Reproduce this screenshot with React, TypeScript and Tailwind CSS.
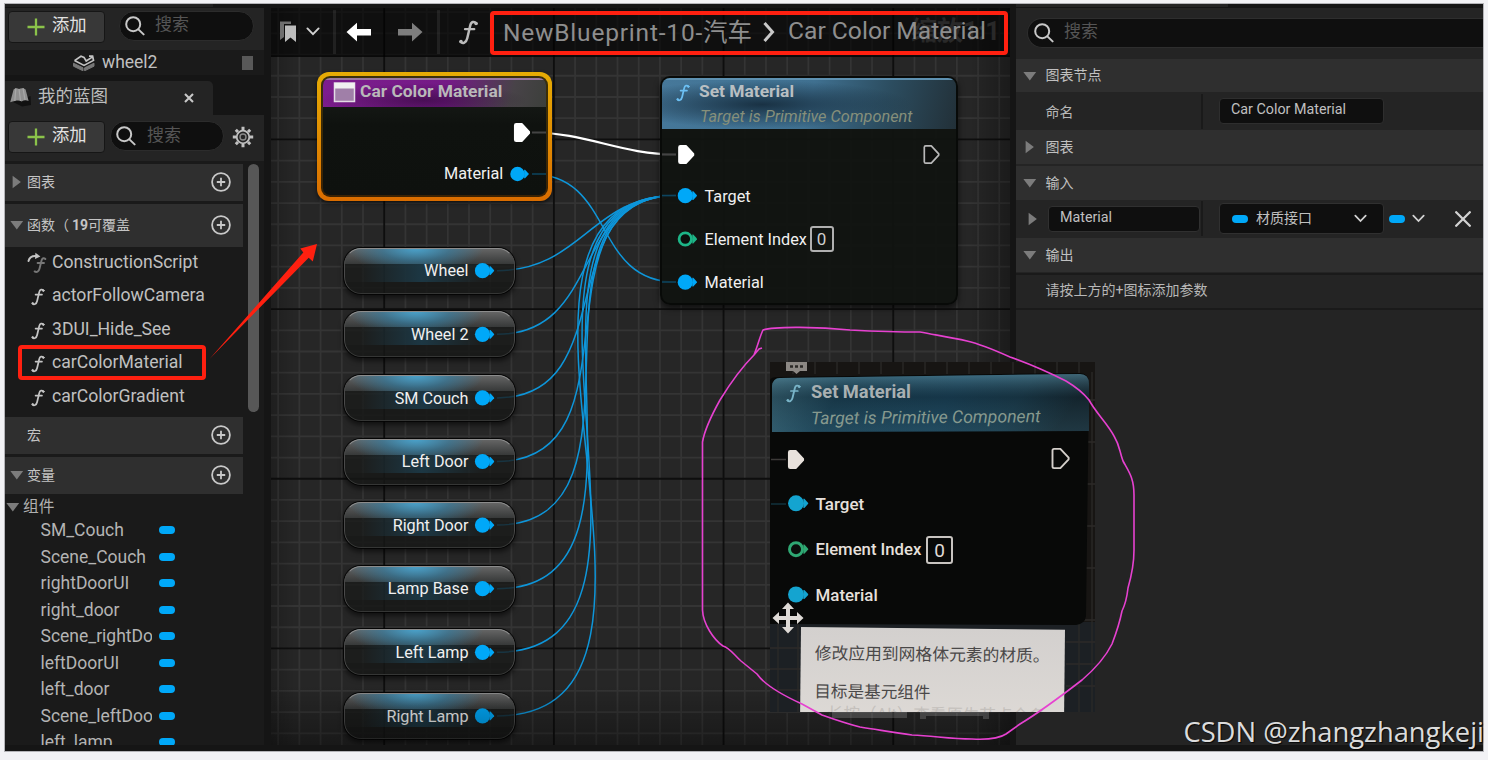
import React from "react";

const BLUE = "#00a8f8";

function FnIcon({ className = "", color = "#c4c4c4" }: { className?: string; color?: string }) {
  return (
    <svg viewBox="0 0 16 20" className={className} fill="none" stroke={color} strokeLinecap="round">
      <path d="M14.4 2.8C12.6.8 10.1 1.2 9.4 4.4L7 14.6C6.2 18.2 3.4 19.4 1.6 17.4" strokeWidth="2" />
      <path d="M5.2 7.3H12.6" strokeWidth="1.8" />
      <circle cx="14" cy="2.7" r=".9" fill={color} />
      <circle cx="2" cy="17.2" r=".9" fill={color} />
    </svg>
  );
}

function SearchIcon() {
  return (
    <svg viewBox="0 0 20 20" className="h-5 w-5 shrink-0" fill="none" stroke="#c8c8c8" strokeWidth="2" strokeLinecap="round">
      <circle cx="8.2" cy="8.2" r="7" />
      <path d="M13.4 13.4L18.6 18.4" />
    </svg>
  );
}

function Tri({ open, className = "" }: { open: boolean; className?: string }) {
  return (
    <svg viewBox="0 0 14 14" className={`h-3.5 w-3.5 shrink-0 ${className}`} fill="#7c7c7c">
      <path d={open ? "M.4 3H13.2L6.8 11.5Z" : "M2.6 .8V13.2L10.9 7Z"} />
    </svg>
  );
}

function PlusCircle() {
  return (
    <svg viewBox="0 0 20 20" className="h-5 w-5 shrink-0" fill="none" stroke="#c8c8c8" strokeWidth="1.8">
      <circle cx="10" cy="10" r="8.9" />
      <path d="M10 5.8V14.2M5.8 10H14.2" />
    </svg>
  );
}

function Chevron({ className = "" }: { className?: string }) {
  return (
    <svg viewBox="0 0 14 9" className={className} fill="none" stroke="#d2d2d2" strokeWidth="1.9" strokeLinecap="round">
      <path d="M1.4 1.4L7 7.2L12.6 1.4" />
    </svg>
  );
}

function AddButton() {
  return (
    <div className="flex h-8 w-[97px] shrink-0 items-center rounded-[4px] border border-[#161616] bg-[#383838] pb-px pl-[18px]">
      <svg viewBox="0 0 18 18" className="h-[18px] w-[18px]" stroke="#8bc34a" strokeWidth="2.3">
        <path d="M9 .5V17.5M.5 9H17.5" />
      </svg>
      <span className="ml-[7px] pb-px text-[17.3px] leading-none text-[#e2e2e2]">添加</span>
    </div>
  );
}

function Section({ open, label, className }: { open: boolean | null; label: React.ReactNode; className: string }) {
  return (
    <div className={`flex w-[238px] shrink-0 items-center bg-[#2f2f2f] pb-px pl-[5px] pr-[12px] ${className}`}>
      {open === null ? <span className="w-3.5" /> : <Tri open={open} />}
      <span className="ml-[3px] flex-1 pb-px text-[14px] leading-none text-[#c4c4c4]">{label}</span>
      <PlusCircle />
    </div>
  );
}

const functions = ["ConstructionScript", "actorFollowCamera", "3DUI_Hide_See", "carColorMaterial", "carColorGradient"];
const variables = ["SM_Couch", "Scene_Couch", "rightDoorUI", "right_door", "Scene_rightDoor", "leftDoorUI", "left_door", "Scene_leftDoor", "left_lamp"];

function LeftPanel() {
  return (
    <div className="flex h-full w-[259px] shrink-0 flex-col bg-[#151515]">
      <div className="h-[3px] w-[208px] shrink-0 bg-[#202020]" />
      <div className="mt-px flex h-[42px] shrink-0 items-start bg-[#242424] pl-[3px] pt-[3px]">
        <AddButton />
        <div className="ml-[14px] flex h-[30px] w-[135px] items-center rounded-full border border-[#2c2c2c] bg-[#0f0f0f] pl-[5px]">
          <SearchIcon />
          <span className="ml-[10px] pb-[3px] text-[17px] leading-none text-[#555]">搜索</span>
        </div>
      </div>
      <div className="flex h-[25px] shrink-0 items-center bg-[#1a1a1a] pl-[68px] pr-[11px]">
        <svg viewBox="0 0 22 16" className="h-4 w-[22px]" fill="none">
          <path d="M.5 8.2L10 12.8V15.8L.5 11.2ZM21 8.2L11.6 12.8V15.8L21 11.2Z" fill="#777" stroke="#777" />
          <path d="M1.5 5.6L8 1.2L11 2.4L13.2 6L20 1.6M1.5 5.6L11 10.4L20.5 5.4L19.6 1.2H16" stroke="#c4c4c4" strokeWidth="1.7" />
        </svg>
        <span className="ml-[7px] flex-1 text-[17.5px] leading-none text-[#c0c0c0]">wheel2</span>
        <span className="h-[14px] w-[11px] bg-[#585858]" />
      </div>
      <div className="mt-[6px] flex h-[34px] w-[208px] shrink-0 items-center rounded-tr-[5px] bg-[#242424] pb-[2px] pl-1 pr-[19px]">
        <svg viewBox="0 0 22 20" className="h-5 w-[22px]">
          <path d="M4 15L13 19.5L22 18L21.5 9Z" fill="#111" />
          <path d="M4.6 2.5C6.4 1 8.2 1 10 2C12 .8 14.5.8 16.6 2.4L19.6 14C17 12.6 15 13 12.6 14.4C10.5 13.2 7 13.2 1.2 15.2Z" fill="#909090" />
          <path d="M10 2L11.5 14M6.8 1.4L5.8 14M14 1.2L16 13" stroke="#a8a8a8" strokeWidth="1.2" />
        </svg>
        <span className="ml-[7px] flex-1 text-[17.5px] leading-none text-[#bdbdbd]">我的蓝图</span>
        <svg viewBox="0 0 10 10" className="mt-[2px] h-[10px] w-[10px]" stroke="#c8c8c8" strokeWidth="2.1">
          <path d="M1 1L9 9M9 1L1 9" />
        </svg>
      </div>
      <div className="flex h-[46px] shrink-0 items-start bg-[#242424] pl-[3px] pt-[6px]">
        <AddButton />
        <div className="ml-[5px] flex h-[30px] w-[114px] shrink-0 items-center rounded-full border border-[#2c2c2c] bg-[#0f0f0f] pl-[5px]">
          <SearchIcon />
          <span className="ml-[11px] pb-[2px] text-[17px] leading-none text-[#555]">搜索</span>
        </div>
        <svg viewBox="-11 -11 22 22" className="ml-[8px] mt-[5px] h-[22px] w-[22px]" fill="none" stroke="#c0c0c0">
          <circle r="6.3" strokeWidth="1.8" />
          <circle r="3" strokeWidth="1.4" stroke="#8a8a8a" />
          <path
            d="M0-10.2V-7M0 7V10.2M-10.2 0H-7M7 0H10.2M-7.2-7.2L-5-5M5 5L7.2 7.2M-7.2 7.2L-5 5M5-5L7.2-7.2"
            strokeWidth="3"
          />
        </svg>
      </div>
      <div className="flex min-h-0 flex-1 bg-[#1a1a1a]">
        <div className="flex w-[238px] flex-col overflow-hidden pt-[3px]">
          <Section open={false} label="图表" className="h-[37px]" />
          <Section open label={<>函数（<b className="ml-[3px] font-bold">19</b>可覆盖</>} className="mt-[3px] h-[43px]" />
          <div className="-mt-px flex h-[171px] shrink-0 flex-col pl-[22px]">
            {functions.map((f, i) => (
              <div key={f} className="flex h-[33.5px] shrink-0 items-center">
                {i === 0 ? (
                  <svg viewBox="0 0 22 22" className="h-[22px] w-[22px]" fill="none" strokeLinecap="round">
                    <path d="M18.4 7C17 5.6 15.2 6 14.6 8.3L12.5 16.8C11.8 19.6 9.6 20.8 7.6 19.4M10.6 11H17" stroke="#777" strokeWidth="1.9" />
                    <path d="M1.5 9C2.4 5.2 5 3.8 9 4" stroke="#c4c4c4" strokeWidth="2" />
                    <path d="M8.4.8L13.4 4.4L8 7Z" fill="#c4c4c4" />
                  </svg>
                ) : (
                  <FnIcon className="ml-1 mr-1 mt-[2px] h-[18px] w-[14px]" />
                )}
                <span className="ml-[3px] text-[17.6px] leading-none text-[#c0c0c0]">{f}</span>
              </div>
            ))}
          </div>
          <Section open={null} label="宏" className="h-[37px]" />
          <Section open label="变量" className="mt-[3px] h-[37px]" />
          <div className="flex h-[23px] shrink-0 items-center pl-px pt-[2px]">
            <Tri open />
            <span className="ml-[3px] text-[15.7px] leading-none text-[#b0b0b0]">组件</span>
          </div>
          {variables.map((v) => (
            <div key={v} className="flex h-[26.5px] shrink-0 items-center pl-[35.5px]">
              <span className="w-[111px] overflow-hidden text-[17.5px] leading-[22px] text-[#b4b4b4]">{v}</span>
              <span className="ml-[7px] h-2 w-4 rounded-full bg-[#00a8f8]" />
            </div>
          ))}
        </div>
        <div className="ml-[5px] mt-[3px] h-[248px] w-[11px] rounded-full bg-[#575757]" />
      </div>
      <div className="h-[6px] shrink-0 bg-[#151515]" />
    </div>
  );
}

function Dot({ x, y, color = BLUE, hollow = false, s = 1 }: { x: number; y: number; color?: string; hollow?: boolean; s?: number }) {
  return (
    <g transform={`translate(${x} ${y}) scale(${s})`}>
      <path d="M7-4.4H8L11.6-.4V.4L8 4.4H7Z" fill={color} />
      {hollow ? <circle r="6.2" fill="#0b0f0c" stroke={color} strokeWidth="2.8" /> : <circle r="7.6" fill={color} />}
    </g>
  );
}

function Exec({ x, y, fill = "#fff", stroke = "#fff" }: { x: number; y: number; fill?: string; stroke?: string }) {
  return (
    <path
      transform={`translate(${x} ${y})`}
      d="M0-7.2Q0-8.6 1.4-8.6H7L14.4-.7V.7L7 8.6H1.4Q0 8.6 0 7.2Z"
      fill={fill}
      stroke={stroke}
      strokeWidth="1.7"
      strokeLinejoin="round"
    />
  );
}

function wire(x1: number, y1: number, x2: number, y2: number) {
  const a = (Math.abs(x2 - x1) + Math.abs(y2 - y1)) / 3;
  return `M${x1} ${y1}C${x1 + a} ${y1} ${x2 - a} ${y2} ${x2} ${y2}`;
}

const getters = ["Wheel", "Wheel 2", "SM Couch", "Left Door", "Right Door", "Lamp Base", "Left Lamp", "Right Lamp"];
const getterY = (i: number) => 270.7 + i * 63.6;

const STEP = 21.21;
const columns = Array.from({ length: 36 }, (_, i) => ({ at: 384.2 + (i - 5) * STEP, major: (i - 5) % 8 === 0 }));
const rows = Array.from({ length: 35 }, (_, i) => ({ at: 139.4 + (i - 6) * STEP, major: (i - 6) % 8 === 0 }));
const gridPath = (major: boolean) =>
  columns.filter((c) => c.major === major).map((c) => `M${c.at} 0V760`).join("") +
  rows.filter((r) => r.major === major).map((r) => `M271 ${r.at}H1010`).join("");

function Label({ x, y, children, className = "" }: { x: number; y: number; children: React.ReactNode; className?: string }) {
  return (
    <span
      className={`absolute -translate-y-1/2 whitespace-nowrap leading-none ${className}`}
      style={{ left: x, top: y }}
    >
      {children}
    </span>
  );
}

function Graph() {
  return (
    <div className="relative mt-1 h-[737px] w-[739px] shrink-0 overflow-hidden bg-[#262626]">
      <div className="absolute -left-[271px] -top-[8px] h-[760px] w-[1488px]">
        <svg className="absolute inset-0" width="1488" height="760">
          <path d={gridPath(false)} stroke="#343434" strokeWidth="1.8" />
          <path d={gridPath(true)} stroke="#0e0e0e" strokeWidth="1.8" />
          <g fill="none" stroke="#0e96da" strokeWidth="1.5">
            {getters.map((g, i) => (
              <path key={g} d={wire(497, getterY(i), 676, 195.5)} />
            ))}
            <path d={wire(531, 174, 676, 282)} />
          </g>
          <path d={wire(531, 132.5, 676, 154.5)} fill="none" stroke="#fff" strokeWidth="2.2" />
        </svg>

        {getters.map((g, i) => (
          <div
            key={g}
            className="absolute left-[342.5px] h-[48px] w-[173.5px] overflow-hidden rounded-[18px] border border-black/80 bg-[#1a1c1a]/80 shadow-[0_3px_5px_rgba(0,0,0,0.55)]"
            style={{ top: getterY(i) - 24 }}
          >
            <div className="h-[16px] bg-linear-to-b from-[#707070]/90 to-[#3a3c3c]/90" />
            <div className="absolute inset-x-0 top-0 h-[16px] bg-[radial-gradient(ellipse_68px_26px_at_42%_0%,rgba(72,166,210,0.95),rgba(50,130,170,0.6)_50%,transparent)]" />
            <div className="absolute left-4 top-[16px] h-[18px] w-[124px] bg-linear-to-r from-transparent via-[#1c3a48]/90 to-transparent" />
            <div className="absolute inset-x-0 bottom-0 top-[34px] bg-black/10" />
            <div className="absolute inset-0 rounded-[17px] border border-t-[#8c8c8c] border-l-[#4a4a4a] border-r-[#4a4a4a] border-b-[#353635]" />
          </div>
        ))}

        <div className="absolute left-[317px] top-[72px] h-[129px] w-[235px] rounded-[12px] bg-linear-to-b from-[#e6ac05] to-[#d96c00] p-1 shadow-[0_2px_4px_rgba(0,0,0,0.6)]">
          <div className="h-full rounded-[9px] bg-linear-to-b from-[#3a300a] to-[#3a2204] p-[2px]">
            <div className="h-full overflow-hidden rounded-[7px] bg-[#0f120f] bg-[linear-gradient(#1b1f1b,#0f120f_40%,#0e110e)]">
              <div className="h-[29px] border-t-2 border-[#9a78a2] bg-[radial-gradient(ellipse_at_45%_75%,rgba(20,0,25,0.45),transparent_60%),linear-gradient(104deg,#7d1d8e,#741a86_55%,#484348_84%,#3c3f3b)]" />
            </div>
          </div>
        </div>

        <div className="absolute left-[660px] top-[76px] h-[229px] w-[298px] overflow-hidden rounded-[10px] border-2 border-[#080a08] bg-[#101310]/93 shadow-[0_3px_6px_rgba(0,0,0,0.6)]">
          <div className="h-[51px] border-t-2 border-[#5d90b0] bg-[radial-gradient(ellipse_150px_24px_at_34%_50%,rgba(18,38,54,0.85),transparent),linear-gradient(104deg,#46789a,#3f7090_50%,#2c4d60_75%,#223038)]" />
        </div>

        <svg className="absolute inset-0" width="1488" height="760">
          <rect x="334.5" y="83" width="20" height="18.5" fill="#a07fa8" stroke="#e4dce6" strokeWidth="1.5" />
          <rect x="334.5" y="83" width="20" height="5.5" fill="#f0f0f0" />
          <path d="M532 132.5H546M662 154.5H676" stroke="#444" strokeWidth="1.8" />
          <path d="M532 174H546M662 195.5H676M662 282H676" stroke="#0d4560" strokeWidth="1.6" />
          <Exec x={514.8} y={132.5} />
          <Dot x={517.5} y={174} s={0.95} />
          <Exec x={679} y={154.5} />
          <Exec x={924.3} y={154.5} fill="#0d0f0d" stroke="#b8b8b8" />
          <Dot x={685.3} y={195.7} />
          <Dot x={685.3} y={239} color="#1db587" hollow />
          <Dot x={685.3} y={282.2} />
          {getters.map((g, i) => (
            <Dot key={g} x={482.5} y={getterY(i)} />
          ))}
        </svg>

        <Label x={360} y={92} className="text-[17.4px] font-bold text-[#b9b9b9]">Car Color Material</Label>
        <Label x={444} y={174} className="text-[16.3px] text-[#f0f0f0]">Material</Label>
        <div className="absolute left-[676px] top-[84px]"><FnIcon className="h-[18px] w-[14px]" color="#6cc0f4" /></div>
        <Label x={699} y={92} className="text-[17.4px] font-bold text-[#b9bfc2]">Set Material</Label>
        <Label x={700} y={116.5} className="text-[16.3px] italic text-[#868f7a]">Target is Primitive Component</Label>
        <Label x={704.5} y={196.5} className="text-[16.3px] text-[#f0f0f0]">Target</Label>
        <Label x={704.5} y={239.5} className="text-[16.3px] text-[#f0f0f0]">Element Index</Label>
        <Label x={704.5} y={282.5} className="text-[16.3px] text-[#f0f0f0]">Material</Label>
        <div className="absolute left-[809.5px] top-[226px] flex h-[26px] w-6 items-center justify-center rounded-[3px] border-2 border-[#b0b0b0] text-[17px] leading-none text-[#cfcfcf]">0</div>
        {getters.map((g, i) => (
          <div
            key={g}
            className="absolute left-[342.5px] w-[126px] -translate-y-1/2 text-right text-[16.2px] leading-none text-[#f0f0f0]"
            style={{ top: getterY(i) + 0.6 }}
          >
            {g}
          </div>
        ))}
        <div className="absolute bottom-[15px] left-[271px] h-[60px] w-[739px] bg-linear-to-t from-black/35 to-transparent" />
        <div className="absolute left-[970px] top-[8px] h-[737px] w-[40px] bg-linear-to-l from-black/30 to-transparent" />
        <div className="absolute left-[271px] top-[8px] h-[737px] w-[24px] bg-linear-to-r from-black/20 to-transparent" />
        <Label x={911} y={31} className="text-[26px] font-bold text-[#666]">缩放1:1</Label>
      </div>

      <div className="relative flex h-[49px] items-center border-b-2 border-black/30 bg-black/60 pl-[9px]">
        <svg viewBox="0 0 16 22" className="h-[22px] w-4">
          <path d="M0 .5H11V3H4V16L0 19Z" fill="#6e6e6e" />
          <path d="M5 4.5H16V21L10.5 16.5L5 21Z" fill="#bdbdbd" />
        </svg>
        <Chevron className="ml-[10px] h-[9px] w-[14px]" />
        <span className="ml-[13px] h-[44px] w-[3px] bg-white/8" />
        <svg viewBox="0 0 25 20" className="ml-[10px] h-5 w-[25px]" fill="#fff">
          <path d="M.5 10L11 .8V7H25V13.4H11V19.4Z" />
        </svg>
        <svg viewBox="0 0 25 20" className="ml-[27px] h-5 w-[25px]" fill="#7d7d7d">
          <path d="M24.5 10L14 .8V7H0V13.4H14V19.4Z" />
        </svg>
        <span className="ml-[14px] h-[44px] w-[3px] bg-white/8" />
        <FnIcon className="ml-[18px] mt-[2px] h-[25px] w-[21px]" color="#bcbcbc" />
        <span className="ml-[24px] whitespace-nowrap pt-[3px] text-[24.5px] leading-none text-[#8e8e8e]"><span className="tracking-[0.8px]">NewBlueprint-10-</span>汽车</span>
        <svg viewBox="0 0 12 20" className="ml-[11px] h-5 w-3" fill="none" stroke="#c8c8c8" strokeWidth="3">
          <path d="M1.5 1L9.5 10L1.5 19" />
        </svg>
        <span className="ml-[13px] whitespace-nowrap text-[24.6px] leading-none text-[#8e8e8e]">Car Color Material</span>
      </div>
    </div>
  );
}

function DetailHeader({ open, label, className }: { open: boolean; label: string; className: string }) {
  return (
    <div className={`flex shrink-0 items-center bg-[#2f2f2f] pl-[6.5px] ${className}`}>
      <Tri open={open} />
      <span className="ml-[9px] pb-px text-[14px] leading-none text-[#c0c0c0]">{label}</span>
    </div>
  );
}

function RightPanel() {
  return (
    <div className="ml-[6px] flex h-full min-w-0 flex-1 flex-col overflow-hidden">
      <div className="h-[3px] w-[212px] shrink-0 bg-[#242424]" />
      <div className="mt-px flex h-[737px] flex-col bg-[#242424]">
        <div className="flex h-[51px] shrink-0 items-start pl-[11px] pt-[10px]">
          <div className="flex h-[30px] flex-1 items-center rounded-l-full border border-r-0 border-[#2e2e2e] bg-[#0f0f0f] pl-[6px]">
            <SearchIcon />
            <span className="ml-[10px] pb-[3px] text-[17px] leading-none text-[#555]">搜索</span>
          </div>
        </div>
        <DetailHeader open label="图表节点" className="h-[33px]" />
        <div className="mt-[2px] flex h-[35px] shrink-0">
          <div className="flex w-[187px] items-center border-r-2 border-[#1a1a1a] pl-[29.5px] text-[14px] leading-none text-[#b8b8b8]">命名</div>
          <div className="flex items-center pb-px pl-4">
            <div className="h-[26px] w-[165px] rounded-[4px] border border-[#2e2e2e] bg-[#0f0f0f] pl-[11px] text-[14.3px] leading-[21px] text-[#c0c0c0]">Car Color Material</div>
          </div>
        </div>
        <DetailHeader open={false} label="图表" className="mt-px h-[34px]" />
        <DetailHeader open label="输入" className="mt-[2px] h-[34px]" />
        <div className="mt-px flex h-[35px] shrink-0">
          <div className="flex w-[187px] items-center border-r-2 border-[#1a1a1a] pl-[10px]">
            <Tri open={false} />
            <div className="ml-[8px] h-[26px] w-[152px] rounded-[4px] border border-[#303030] bg-[#0f0f0f] pl-[11px] text-[14.3px] leading-[20px] text-[#c0c0c0]">Material</div>
          </div>
          <div className="flex items-center pl-4">
            <div className="flex h-[31px] w-[165px] items-center rounded-[4px] border border-[#303030] bg-[#0f0f0f] pl-[12px]">
              <span className="h-2 w-4 rounded-full bg-[#00a8f8]" />
              <span className="ml-2 w-[98px] pb-px text-[14px] leading-none text-[#c0c0c0]">材质接口</span>
              <Chevron className="h-[9px] w-[13px]" />
            </div>
            <span className="ml-[5px] h-2 w-4 rounded-full bg-[#00a8f8]" />
            <Chevron className="ml-[7px] h-[9px] w-[13px]" />
            <svg viewBox="0 0 16 16" className="ml-[30px] h-4 w-4" stroke="#d2d2d2" strokeWidth="2.3" strokeLinecap="round">
              <path d="M1.2 1.2L14.8 14.8M14.8 1.2L1.2 14.8" />
            </svg>
          </div>
        </div>
        <DetailHeader open label="输出" className="mt-[2px] h-[34px]" />
        <div className="mt-px flex h-[37px] shrink-0 items-center border-y-2 border-[#1a1a1a] pb-[3px] pl-[29.5px] text-[14px] leading-none text-[#b8b8b8]">请按上方的+图标添加参数</div>
      </div>
    </div>
  );
}

function PhotoInset() {
  return (
    <div className="absolute left-[770px] top-[362px] h-[350px] w-[325px] overflow-hidden bg-[#171513]">
      <div className="absolute inset-x-0 bottom-0 top-[260px] bg-[#1c2024]" />
      <svg className="absolute inset-0" width="325" height="350">
        <g stroke="#2c2a28" strokeWidth="1.3" fill="none">
          <path d="M23 0V12M45 0V12M67 0V12M89 0V12M111 0V12M133 0V12M155 0V12M177 0V12M199 0V12M221 0V12M243 0V12M265 0V12M287 0V12M309 0V12" />
          <path d="M322 10V350M316 38H325M316 80H325M316 122H325M316 164H325M316 206H325M300 258H325M296 280H325M296 302H325M296 324H325M309 262V350M0 286H31M0 307H31M0 328H31M8 262V350M28 262V350" />
        </g>
        <defs>
          <linearGradient id="photoHead" x1="0" y1="0" x2="1" y2=".12">
            <stop offset="0" stopColor="#3e6c7c" />
            <stop offset=".25" stopColor="#1b4154" />
            <stop offset=".6" stopColor="#1a4258" />
            <stop offset=".82" stopColor="#1b3c4c" />
            <stop offset="1" stopColor="#172830" />
          </linearGradient>
          <linearGradient id="photoShade" x1="0" y1="0" x2="0" y2="1">
            <stop offset="0" stopColor="#5f95aa" stopOpacity=".55" />
            <stop offset=".4" stopColor="#0b1a24" stopOpacity=".3" />
            <stop offset="1" stopColor="#3a6678" stopOpacity=".25" />
          </linearGradient>
        </defs>
        <path d="M0 18Q1 15 8 15L310 11Q319 11 319 22L316 254Q315 262 306 263L0 262Z" fill="#080908" />
        <path d="M2 70V24Q3 16 10 16L310 12Q319 12 319 22V69Z" fill="url(#photoHead)" />
        <path d="M2 70V24Q3 16 10 16L310 12Q319 12 319 22V69Z" fill="url(#photoShade)" />
        <path d="M16 0H37V9H30L26.5 12L23 9H16Z" fill="#8c8884" />
        <path d="M20 4.5H23M25 4.5H28M30 4.5H33" stroke="#2a2826" strokeWidth="2.4" />
        <path d="M1 97.5H16" stroke="#3c3a38" strokeWidth="1.5" />
        <path d="M1 142H16" stroke="#10323c" strokeWidth="1.5" />
        <Exec x={18.8} y={97.5} fill="#e8e2dc" stroke="#e8e2dc" />
        <g transform="translate(282.5 96.5) scale(1.12)"><Exec x={0} y={0} fill="none" stroke="#d4cfca" /></g>
        <Dot x={26} y={141.3} s={1.05} color="#14a4d0" />
        <Dot x={26} y={187.2} s={1.05} color="#2fa873" hollow />
        <Dot x={26} y={232.5} s={1.05} color="#14a4d0" />
      </svg>
      <div className="absolute left-[16px] top-[22px]"><FnIcon className="h-[19px] w-[15px]" color="#79b4c8" /></div>
      <Label x={41} y={30} className="text-[18.3px] font-bold text-[#a9b0b2]">Set Material</Label>
      <Label x={41} y={56} className="-rotate-[0.5deg] text-[17.6px] italic text-[#86998e]">Target is Primitive Component</Label>
      <Label x={45.5} y={141.5} className="text-[17px] font-medium text-[#e6e0dc]">Target</Label>
      <Label x={45.5} y={188} className="text-[16.7px] font-medium text-[#e6e0dc]">Element Index</Label>
      <Label x={45.5} y={233} className="text-[16.9px] font-medium text-[#e6e0dc]">Material</Label>
      <div className="absolute left-[156px] top-[174px] flex h-7 w-[27px] items-center justify-center rounded-[3px] border-2 border-[#c8c4c0] text-[19px] leading-none text-[#e0dcd8]">0</div>
      <div className="absolute left-[31px] top-[265px] h-[100px] w-[264px] origin-top-left rotate-[0.6deg] bg-linear-to-b from-[#d3d0ce] to-[#dedad6]">
        <div className="whitespace-nowrap pl-[14px] pt-[18px] text-[16.8px] leading-none text-[#4a4848]">修改应用到网格体元素的材质。</div>
        <div className="whitespace-nowrap pl-[14px] pt-[22px] text-[16.6px] leading-none text-[#4a4848]">目标是基元组件</div>
        <div className="whitespace-nowrap pl-[27px] pt-[6px] text-[16.5px] leading-none text-[#c4c0bc]">长按（Alt）查看原生节点全名</div>
      </div>
      <svg viewBox="-16 -16 32 32" className="absolute left-[2px] top-[240px] h-8 w-8" fill="#dedad6">
        <path d="M0-15.5L6-9H2V-2H9V-6L15.5 0L9 6V2H2V9H6L0 15.5L-6 9H-2V2H-9V6L-15.5 0L-9-6V-2H-2V-9H-6Z" />
      </svg>
    </div>
  );
}

function Annotations() {
  return (
    <>
      <svg className="absolute inset-0" width="1488" height="760" fill="none">
        <path d="M832 712H907V718H832ZM920 712H989V719H983V716H926V719H920Z" fill="#fff" fillOpacity=".17" />
        <path
          d="M762 348L759 349L754 355C741 368 728 387 720 400Q705 427 702.5 442V610C703 624 714 640 723 646C730 648 734 655 741 661L757 674C764 684 780 694 802 704L822 715C836 720 848 724 860 727C880 730 895 733 912 735C935 736 950 739 972 739C990 740 1000 738 1006 734L1020 724C1040 712 1060 697 1082 680Q1103 662 1112 644C1117 631 1120 621 1122 611C1125 605 1127 597 1128 588C1132 574 1134 560 1134 550V495C1134 478 1129 472 1123 461C1119 450 1120 446 1114 436C1107 423 1096 413 1089 400Q1081 390 1066 381C1050 373 1030 364 1010 357C990 348 980 344 967 341C950 337 935 335 920 332C900 332 870 331 850 330C820 327 775 326 763 330C760 336 758 345 754 355"
          stroke="#e641d0"
          strokeWidth="1.6"
          strokeLinejoin="round"
        />
        <path d="M209.5 359L303.3 252.5L300.3 248.5L317 244L312.8 261.5L308.7 257.8Z" fill="#ff2010" />
      </svg>
      <div className="absolute left-[490px] top-[11px] h-11 w-[518px] rounded-[4px] border-4 border-[#ff2010]" />
      <div className="absolute left-[18px] top-[345px] h-[35px] w-[188px] rounded-[4px] border-4 border-[#ff2010]" />
      <div className="absolute right-[4px] top-[713px] whitespace-nowrap font-['Open_Sans',sans-serif] text-[27.35px] leading-[38px] text-[#dcdcdc] [text-shadow:1px_1px_1px_rgba(0,0,0,0.8)]">
        CSDN @zhangzhangkeji
      </div>
    </>
  );
}

export default function App() {
  return (
    <div className="relative h-[760px] w-[1488px] overflow-hidden bg-[#f2f2f5] pl-[5px] pr-[5px] pt-1 font-['Roboto','Noto_Sans_CJK_SC',sans-serif]">
      <div className="flex h-[747px] w-[1478px] bg-[#151515] shadow-[0_0_0_1px_#b4b4b8]">
        <LeftPanel />
        <div className="w-[7px] shrink-0" />
        <Graph />
        <RightPanel />
      </div>
      <PhotoInset />
      <Annotations />
    </div>
  );
}
